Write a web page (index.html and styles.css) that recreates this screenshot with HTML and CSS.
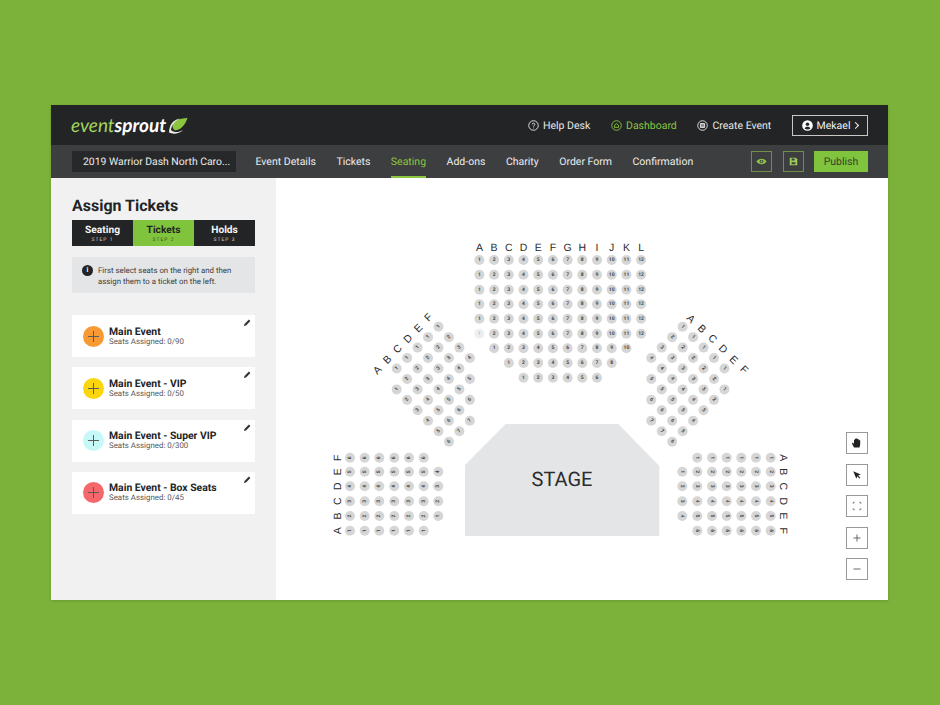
FILE: index.html
```html
<!DOCTYPE html>
<html>
	<head>
		<meta charset="utf-8">
		<meta name="viewport" content="width=device-width, initial-scale=1">
		<title>Assign Tickets</title>
		<link rel="stylesheet" href="styles.css">
	</head>
	<body>
		<div class="app">
			<header class="topbar">
				<a class="logo">
					<span class="logo-text"><span class="logo-light">event</span><b>sprout</b></span>
					<svg class="logo-leaf" viewBox="0 0 20 17" width="20" height="17">
						<path d="M7 13.500C12 13 17 9 19.500 .8 13 2 6 2.200 4.500 7.500 4 9.500 5 12 7 13.500Z" fill="#8cc63f"/>
						<path d="M1 15.500C1.500 8 4 3.500 12 1.500 6 4.500 3.500 8.500 3 13 6 16 11 15.500 15 13 11 17 5 17.500 1 15.500Z" fill="#e9eee0"/>
					</svg>
				</a>
				<nav class="top-links">
					<a class="top-link">
						<svg class="round-ico" viewBox="0 0 12 12"><circle cx="6" cy="6" r="5.200"/><path d="M4.500 4.800C4.500 3 7.500 3 7.500 4.800 7.500 5.900 6 5.900 6 7.200M6 8.300V9.100"/></svg>
						Help Desk
					</a>
					<a class="top-link is-active">
						<svg class="round-ico" viewBox="0 0 12 12"><circle cx="6" cy="6" r="5.200"/><path d="M3.800 8V5.700L6 3.900 8.200 5.700V8H3.800Z"/></svg>
						Dashboard
					</a>
					<a class="top-link">
						<svg class="round-ico" viewBox="0 0 12 12"><circle cx="6" cy="6" r="5.200"/><path d="M3.700 3.800H8.300V8.200H3.700ZM3.700 5.300H8.300M3.700 6.800H8.300"/></svg>
						Create Event
					</a>
					<a class="user-btn">
						<svg viewBox="0 0 12 12" width="11" height="11"><circle cx="6" cy="6" r="5.800" fill="#fff"/><circle cx="6" cy="4.600" r="1.900" fill="#222426"/><path d="M2.800 9.300C3.300 6.800 8.700 6.800 9.200 9.300 7.500 10.600 4.500 10.600 2.800 9.300Z" fill="#222426"/></svg>
						Mekael
						<span class="chev"></span>
					</a>
				</nav>
			</header>

			<div class="subbar">
				<div class="event-name">2019 Warrior Dash North Caro...</div>
				<nav class="steps">
					<a>Event Details</a>
					<a>Tickets</a>
					<a class="is-active">Seating</a>
					<a>Add-ons</a>
					<a>Charity</a>
					<a>Order Form</a>
					<a>Confirmation</a>
				</nav>
				<div class="actions">
					<a class="icon-btn">
						<svg viewBox="0 0 12 12" width="11" height="11"><path d="M.5 6C3 2 9 2 11.500 6 9 10 3 10 .5 6Z" fill="#8cc63f"/><circle cx="6" cy="6" r="2" fill="#3c3e40"/><circle cx="6" cy="6" r="1" fill="#8cc63f"/></svg>
					</a>
					<a class="icon-btn">
						<svg viewBox="0 0 12 12" width="9" height="9"><path d="M1 1H9L11 3V11H1Z" fill="#9ccc55"/><path d="M3.500 2H7.500V4.500H3.500ZM3.500 7H8.500V9.800H3.500Z" fill="#3c3e40"/></svg>
					</a>
					<a class="publish">Publish</a>
				</div>
			</div>

			<div class="content">
				<aside class="sidebar">
					<h1>Assign Tickets</h1>
					<div class="tabs">
						<a class="tab"><b>Seating</b><small>STEP 1</small></a>
						<a class="tab is-active"><b>Tickets</b><small>STEP 2</small></a>
						<a class="tab"><b>Holds</b><small>STEP 3</small></a>
					</div>
					<div class="info">
						<span class="info-ico">i</span>
						<p>First select seats on the right and then assign them to a ticket on the left.</p>
					</div>
					<ul class="tickets">
						<li class="ticket">
							<span class="add orange"></span>
							<div><h3>Main Event</h3><p>Seats Assigned: 0/90</p></div>
							<svg class="pencil" viewBox="0 0 8 8"><path d="M0 8L.6 5.700 5.600 .7 7.300 2.400 2.300 7.400Z"/></svg>
						</li>
						<li class="ticket">
							<span class="add yellow"></span>
							<div><h3>Main Event - VIP</h3><p>Seats Assigned: 0/50</p></div>
							<svg class="pencil" viewBox="0 0 8 8"><path d="M0 8L.6 5.700 5.600 .7 7.300 2.400 2.300 7.400Z"/></svg>
						</li>
						<li class="ticket">
							<span class="add cyan"></span>
							<div><h3>Main Event - Super VIP</h3><p>Seats Assigned: 0/300</p></div>
							<svg class="pencil" viewBox="0 0 8 8"><path d="M0 8L.6 5.700 5.600 .7 7.300 2.400 2.300 7.400Z"/></svg>
						</li>
						<li class="ticket">
							<span class="add red"></span>
							<div><h3>Main Event - Box Seats</h3><p>Seats Assigned: 0/45</p></div>
							<svg class="pencil" viewBox="0 0 8 8"><path d="M0 8L.6 5.700 5.600 .7 7.300 2.400 2.300 7.400Z"/></svg>
						</li>
					</ul>
				</aside>

				<main class="map">
					<!-- viewBox is in page coordinates so the seat numbers are easy to check against the picture -->
					<svg id="seatmap" viewBox="276 178 612 422" width="612" height="422">
						<polygon class="stage" points="505.700,424 618.300,424 659.300,466 659.300,536 465,536 465,465"/>
						<text class="stage-label" x="562" y="486">STAGE</text>
					</svg>
					<div class="tools">
						<a class="tool">
							<svg viewBox="0 0 12 12" width="12" height="12"><path d="M3 10.500L1 6.500C.8 5.700 1.800 5.300 2.300 6L3 7V3C3 2.300 4 2.300 4 3V2C4 1.200 5.200 1.200 5.200 2V1.800C5.200 1 6.500 1 6.500 1.800V2.500C6.500 1.800 7.800 1.800 7.800 2.500V3.500C7.800 2.800 9.200 2.800 9.200 3.500V7.500L8.500 10.500Z" fill="#222"/></svg>
						</a>
						<a class="tool">
							<svg viewBox="0 0 12 12" width="10" height="10"><path d="M1.500 1.500L10.500 5.300 7.300 6.500 10 9.300 9 10.300 6.300 7.500 5.200 10.500Z" fill="#222"/></svg>
						</a>
						<a class="tool">
							<svg viewBox="0 0 12 12" width="10" height="10"><path d="M1.500 3.500V1.500H3.500M8.500 1.500H10.500V3.500M10.500 8.500V10.500H8.500M3.500 10.500H1.500V8.500" fill="none" stroke="#777" stroke-width="1"/></svg>
						</a>
						<a class="tool">
							<svg viewBox="0 0 12 12" width="12" height="12"><path d="M6 2.500V9.500M2.500 6H9.500" fill="none" stroke="#666" stroke-width="1"/></svg>
						</a>
						<a class="tool">
							<svg viewBox="0 0 12 12" width="12" height="12"><path d="M2.500 6H9.500" fill="none" stroke="#666" stroke-width="1"/></svg>
						</a>
					</div>
				</main>
			</div>
		</div>
		<script src="seats.js"></script>
	</body>
</html>
```

FILE: styles.css
```css
*{
	box-sizing: border-box;
}
body{
	margin: 0;
	width: 940px;
	height: 705px;
	overflow: hidden;
	background: #7cb13a;
	font-family: Roboto, "Liberation Sans", sans-serif;
	text-rendering: geometricPrecision;
	padding: 105px 52px 105px 51px;
}
a{text-decoration: none; color: inherit;}
h1,h3,p,ul{margin: 0; padding: 0;}
ul{list-style-type: none;}

.app{
	height: 495px;
	display: flex;
	flex-direction: column;
	box-shadow: 0 1px 3px #0002;
}

/* top bar */
.topbar{
	height: 40px;
	background: #222426;
	display: flex;
	align-items: center;
	justify-content: space-between;
	padding: 0 20px;
	color: #e8e8e8;
}
.logo{
	display: flex;
	align-items: center;
	gap: 2px;
}
.logo-text{
	font-family: Lato, "Open Sans", sans-serif;
	font-style: italic;
	font-size: 19px;
	color: #fff;
}
.logo-light{color: #a4d65e;}
.logo-text b{font-weight: 700;}
.top-links{
	display: flex;
	align-items: center;
	font-size: 10.500px;
}
.top-link{
	display: flex;
	align-items: center;
	gap: 4px;
	margin-right: 20.700px;
}
.top-link.is-active{color: #8cc63f;}
.round-ico{
	width: 11px;
	height: 11px;
	fill: none;
	stroke: currentColor;
	stroke-width: 1;
}
.user-btn{
	width: 76px;
	height: 21px;
	border: 1px solid #c8c8c8;
	display: flex;
	align-items: center;
	justify-content: center;
	gap: 4px;
	color: #f2f2f2;
}
.chev{
	width: 5px;
	height: 5px;
	border-top: 1px solid #f2f2f2;
	border-right: 1px solid #f2f2f2;
	transform: rotate(45deg);
	margin-left: -1px;
}

/* second bar */
.subbar{
	height: 33px;
	background: #3c3e40;
	display: flex;
	align-items: center;
	padding: 0 20px 0 21px;
	color: #ececec;
	font-size: 10.500px;
}
.event-name{
	width: 164px;
	height: 21px;
	background: #26282a;
	line-height: 21px;
	padding-left: 11px;
	font-size: 10.400px;
	white-space: nowrap;
}
.steps{
	display: flex;
	gap: 20.500px;
	margin-left: 19.500px;
	height: 33px;
}
.steps a{
	line-height: 33px;
	height: 33px;
}
.steps a.is-active{
	color: #8cc63f;
	border-bottom: 2px solid #8cc63f;
}
.actions{
	margin-left: auto;
	display: flex;
	gap: 10.500px;
}
.icon-btn{
	width: 21px;
	height: 21px;
	border: 1px solid #6f8f47;
	display: flex;
	align-items: center;
	justify-content: center;
}
.publish{
	width: 54px;
	height: 21px;
	background: #80c33c;
	color: #38432c;
	line-height: 21px;
	text-align: center;
}

/* main area */
.content{
	flex: 1;
	display: flex;
}
.sidebar{
	width: 225px;
	background: #f1f1f2;
	padding: 18px 21px 0;
}
h1{
	font-size: 16px;
	font-weight: 700;
	color: #222426;
	line-height: 19px;
}
.tabs{
	display: flex;
	margin-top: 5px;
	height: 26px;
}
.tab{
	flex: 1;
	background: #222426;
	color: #f4f4f4;
	display: flex;
	flex-direction: column;
	align-items: center;
	padding-top: 4px;
}
.tab b{
	font-size: 10.200px;
	line-height: 13px;
}
.tab small{
	font-size: 5px;
	line-height: 6px;
	letter-spacing: 1px;
	color: #d5d5d5;
}
.tab.is-active{
	background: #80c33c;
	color: #222426;
}
.tab.is-active small{color: #3a4a28;}
.info{
	margin-top: 11px;
	height: 36px;
	background: #e4e5e7;
	display: flex;
	align-items: flex-start;
	padding: 8px 0 0 10px;
	gap: 5px;
}
.info-ico{
	width: 11px;
	height: 11px;
	flex: none;
	border-radius: 50%;
	background: #222426;
	color: #fff;
	font-size: 7px;
	font-weight: 700;
	line-height: 11px;
	text-align: center;
}
.info p{
	font-size: 7.850px;
	line-height: 11px;
	color: #3c3e40;
	width: 145px;
}
.tickets{
	margin-top: 22px;
	display: flex;
	flex-direction: column;
	gap: 10.300px;
}
.ticket{
	height: 42px;
	background: #fff;
	display: flex;
	align-items: center;
	padding-left: 10.500px;
	gap: 5.500px;
	position: relative;
}
.ticket h3{
	font-size: 10.400px;
	font-weight: 700;
	line-height: 11px;
	color: #222426;
}
.ticket p{
	font-size: 7.900px;
	line-height: 10px;
	color: #55575a;
}
.pencil{
	position: absolute;
	top: 4px;
	right: 4px;
	width: 7px;
	height: 7px;
	fill: #333;
}
.add{
	width: 21px;
	height: 21px;
	border-radius: 50%;
	position: relative;
	flex: none;
}
.add::before, .add::after{
	content: "";
	position: absolute;
	background: #5a5a5a;
}
.add::before{left: 5px; right: 5px; top: 10px; height: 1px;}
.add::after{top: 5px; bottom: 5px; left: 10px; width: 1px;}
.orange{background: #f79a34;}
.yellow{background: #fbd60e;}
.cyan{background: #c6f8f8;}
.red{background: #f4686b;}

/* seat map */
.map{
	flex: 1;
	background: #fff;
	position: relative;
}
#seatmap{display: block;}
.stage{fill: #e4e5e7;}
.stage-label{
	font-size: 20px;
	fill: #2a2c2e;
	text-anchor: middle;
}
.seat{fill: #d6d6d6;}
.seat.is-faded{fill: #efefef;}
.seat-num{
	font-size: 5px;
	font-weight: 700;
	fill: #444;
	text-anchor: middle;
	dominant-baseline: central;
}
.seat-num.is-faded{fill: #bbb;}
.row-label{
	font-family: "Liberation Sans", sans-serif;
	font-size: 10.500px;
	fill: #2a2c2e;
	text-anchor: middle;
	dominant-baseline: central;
}
.tools{
	position: absolute;
	right: 20px;
	bottom: 20px;
	display: flex;
	flex-direction: column;
	gap: 9.500px;
}
.tool{
	width: 22px;
	height: 22px;
	border: 1.500px solid #999;
	background: #fff;
	display: flex;
	align-items: center;
	justify-content: center;
}
```

FILE: seats.js
```js
var svg = document.getElementById("seatmap");
var NS = "http://www.w3.org/2000/svg";

function addText(cls, x, y, str, rot){
	var t = document.createElementNS(NS, "text");
	t.setAttribute("class", cls);
	t.setAttribute("x", x);
	t.setAttribute("y", y);
	if (rot) t.setAttribute("transform", "rotate(" + rot + " " + x + " " + y + ")");
	t.textContent = str;
	svg.appendChild(t);
}

function addSeat(x, y, num, rot, faded){
	var c = document.createElementNS(NS, "circle");
	c.setAttribute("class", "seat" + (faded ? " is-faded" : ""));
	c.setAttribute("cx", x);
	c.setAttribute("cy", y);
	c.setAttribute("r", 5);
	svg.appendChild(c);
	addText("seat-num" + (faded ? " is-faded" : ""), x, y, num, rot);
}

// center block
var letters = "ABCDEFGHIJKL";
var colX = function(i){ return 479.4 + 14.7 * i; };
var rowY = [260, 274.7, 289.7, 304.3, 318.7, 333.7, 348.3, 363, 377.7];
var rows = [[0, 12], [0, 12], [0, 12], [0, 12], [0, 12], [0, 12], [1, 10], [2, 8], [3, 6]];

for (var i = 0; i < 12; i++) addText("row-label", colX(i), 248, letters[i]);
rows.forEach(function(r, y){
	for (var n = 0; n < r[1]; n++){
		addSeat(colX(r[0] + n), rowY[y], n + 1, 0, y == 5 && n == 0);
	}
});

// angled blocks, each letter row runs down and away from the center block
// [first column, first row, seat count], A to F
var STEP = 10.45;
var diag = [[0, 6, 6], [0, 4, 7], [1, 3, 7], [2, 2, 6], [3, 1, 5], [4, 0, 4]];
var diagLabels = [[377.7, 370.3], [387.7, 360], [397.7, 349.3], [408.3, 339], [418.7, 328.3], [428.7, 317.7]];
var diagLabelsR = [[690.7, 319], [701.7, 329], [712.3, 339], [722.7, 349.3], [733.3, 360], [744, 370]];

diag.forEach(function(r, k){
	addText("row-label", diagLabels[k][0], diagLabels[k][1], letters[k], -45);
	addText("row-label", diagLabelsR[k][0], diagLabelsR[k][1], letters[k], 45);
	for (var n = 0; n < r[2]; n++){
		var c = r[0] + n, y = 326.7 + (r[1] + n) * STEP;
		addSeat(396.7 + c * STEP, y, n + 1, -45);
		addSeat(651.3 + (7 - c) * STEP, y, n + 1, 45);
	}
});

// lower blocks, seat numbers count along the short side
var lowY = [457.7, 471.7, 486.3, 501.3, 516, 530.7];
var lowL = [350, 364.7, 379.3, 394.3, 409, 423.7, 438.3];
var lowR = [682.3, 697.3, 712, 726.7, 741.3, 756, 770.7];

for (var k = 0; k < 6; k++){
	addText("row-label", 338.3, lowY[k], letters[5 - k], -90);
	addText("row-label", 783.3, lowY[k], letters[k], 90);
	for (var j = 0; j < 6; j++){
		addSeat(lowL[j], lowY[k], 6 - k, -90);
		addSeat(lowR[j + 1], lowY[k], k + 1, 90);
	}
	// the short seventh column only has rows B to E
	if (k >= 1 && k <= 4){
		addSeat(lowL[6], lowY[k], 5 - k, -90);
		addSeat(lowR[0], lowY[k], k, 90);
	}
}
```
